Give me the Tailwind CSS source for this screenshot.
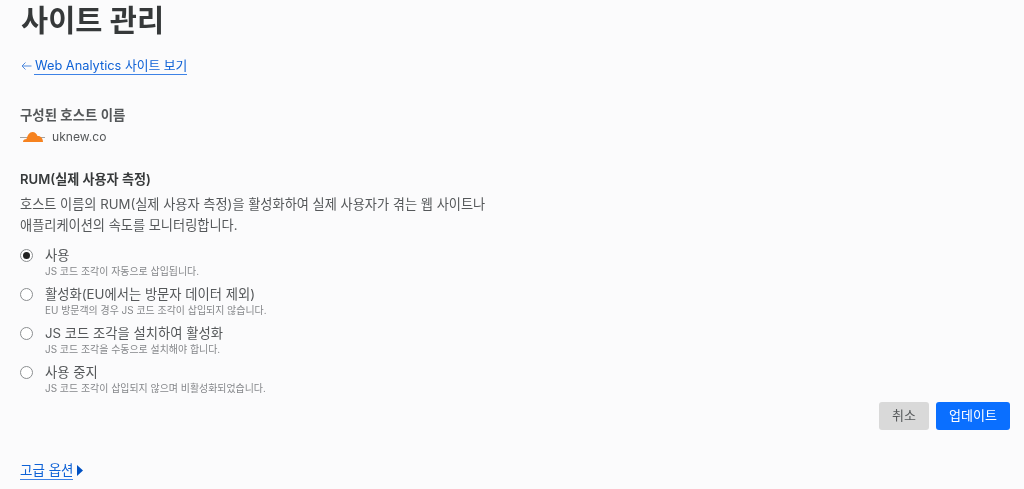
<!DOCTYPE html>
<html lang="ko">

<head>
  <meta charset="UTF-8">
  <meta name="viewport" content="width=device-width, initial-scale=1.0">
  <title>사이트 관리</title>
  <script src="https://cdn.jsdelivr.net/npm/@tailwindcss/browser@4"></script>
</head>

<body class="bg-[#fbfbfc] font-['Inter','Noto_Sans_CJK_KR',sans-serif] text-[#36393a] overflow-hidden">
  <div class="h-[489px] w-[1024px] pl-5 pr-[14px] blur-[0.4px]">
    <h1 class="text-[29.500px] leading-[40px] font-semibold h-[40px] pl-[1px]">사이트 관리</h1>

    <!-- back link -->
    <div class="mt-[17px] flex items-center text-[12.800px] text-[#0f62d6] w-fit">
      <svg class="w-[11px] h-[10px] mr-[2px] ml-[1px]" viewBox="0 0 11 10" fill="none" stroke="#4f8ade" stroke-width="1">
        <path d="M10.500 5H1M4.500 1.500L1 5l3.500 3.500" />
      </svg>
      <span class="h-[18px] leading-[18px] border-b border-[#3d82e6] pl-[1px]">Web Analytics 사이트 보기</span>
    </div>

    <!-- hostname -->
    <div class="mt-[31px] text-[13.400px] leading-[18px] font-semibold text-[#55585a]">구성된 호스트 이름</div>
    <div class="mt-[3px] h-[20px] flex items-center gap-[7px] text-[12.100px] text-[#55585a]">
      <svg class="w-[25px] h-[12px]" viewBox="0 0 25 12">
        <path d="M0 6.500h25" stroke="#a3a3a3" stroke-width="1" />
        <path d="M3 11c0-1.700 1.300-3 3.500-3C7.500 4 9.500 1 12.500 1c2.500 0 4.300 1.700 5 4 2.800-.5 5.500 2 5.500 6z" fill="#f6821f" />
      </svg>
      <span>uknew.co</span>
    </div>

    <!-- RUM -->
    <div class="mt-[23px] text-[13.100px] leading-[18px] font-semibold text-[#36393a]">RUM(실제 사용자 측정)</div>
    <p class="mt-[6px] w-[470px] text-[13.200px] leading-[21px] text-[#55585a]">호스트 이름의 RUM(실제 사용자 측정)을 활성화하여 실제 사용자가 겪는 웹 사이트나 애플리케이션의 속도를 모니터링합니다.</p>

    <div class="mt-[10px] flex flex-col gap-[9px]">
      <div class="flex h-[30px]">
        <span class="mt-[3px] w-[13px] h-[13px] rounded-full border border-[#8a8d8f] flex items-center justify-center bg-white"><span class="w-[7px] h-[7px] rounded-full bg-[#222]"></span></span>
        <div class="ml-[12px]">
          <div class="text-[13.300px] leading-[18px] text-[#55585a]">사용</div>
          <div class="mt-[1px] text-[9.950px] leading-[12px] text-[#85878a]">JS 코드 조각이 자동으로 삽입됩니다.</div>
        </div>
      </div>
      <div class="flex h-[30px]">
        <span class="mt-[3px] w-[13px] h-[13px] rounded-full border border-[#8a8d8f] bg-white"></span>
        <div class="ml-[12px]">
          <div class="text-[13.300px] leading-[18px] text-[#55585a]">활성화(EU에서는 방문자 데이터 제외)</div>
          <div class="mt-[1px] text-[9.950px] leading-[12px] text-[#85878a]">EU 방문객의 경우 JS 코드 조각이 삽입되지 않습니다.</div>
        </div>
      </div>
      <div class="flex h-[30px]">
        <span class="mt-[3px] w-[13px] h-[13px] rounded-full border border-[#8a8d8f] bg-white"></span>
        <div class="ml-[12px]">
          <div class="text-[13.300px] leading-[18px] text-[#55585a]">JS 코드 조각을 설치하여 활성화</div>
          <div class="mt-[1px] text-[9.950px] leading-[12px] text-[#85878a]">JS 코드 조각을 수동으로 설치해야 합니다.</div>
        </div>
      </div>
      <div class="flex h-[30px]">
        <span class="mt-[3px] w-[13px] h-[13px] rounded-full border border-[#8a8d8f] bg-white"></span>
        <div class="ml-[12px]">
          <div class="text-[13.300px] leading-[18px] text-[#55585a]">사용 중지</div>
          <div class="mt-[1px] text-[9.950px] leading-[12px] text-[#85878a]">JS 코드 조각이 삽입되지 않으며 비활성화되었습니다.</div>
        </div>
      </div>
    </div>

    <!-- actions -->
    <div class="mt-[9px] flex justify-end gap-[7px]">
      <button class="w-[50px] h-[28px] rounded-[3px] bg-[#d9d9d9] text-[13px] text-[#55585a]">취소</button>
      <button class="w-[74px] h-[28px] rounded-[3px] bg-[#0a6fff] text-[13px] text-white">업데이트</button>
    </div>

    <div class="mt-[30px] flex items-center h-[20px] text-[13.500px] text-[#0f62d6]">
      <span class="leading-[18px] border-b border-[#3d82e6]">고급 옵션</span>
      <svg class="w-[6px] h-[11px] ml-[4px]" viewBox="0 0 6 11"><path d="M0 0l6 5.500-6 5.500z" fill="#0051c3" /></svg>
    </div>
  </div>
</body>

</html>
